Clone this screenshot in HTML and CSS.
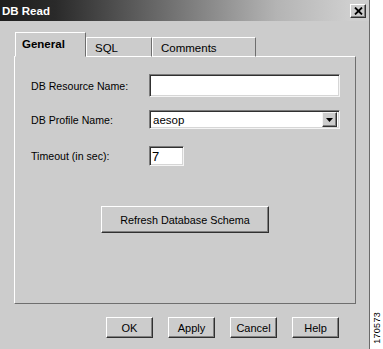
FILE: index.html
```html
<!DOCTYPE html>
<html>
<head>
<meta charset="utf-8">
<link rel="stylesheet" href="styles.css">
</head>
<body>
<div class="page">
  <div class="dialog">
    <div class="titlebar">
      <span class="title">DB Read</span>
      <span class="close"><svg width="9" height="8" viewBox="0 0 9 8"><path d="M1 0.5 L8 7.5 M8 0.5 L1 7.5" stroke="#000" stroke-width="1.8" fill="none"/></svg></span>
    </div>
    <div class="content">
      <div class="tabs">
        <div class="tab active">General</div>
        <div class="tab sql">SQL</div>
        <div class="tab comments">Comments</div>
      </div>
      <div class="panel">
        <div class="row r1">
          <span class="label">DB Resource Name:</span>
          <span class="field wide tall"></span>
        </div>
        <div class="row r2">
          <span class="label">DB Profile Name:</span>
          <span class="field wide select"><span class="val">aesop</span><span class="drop"><svg width="7" height="4" viewBox="0 0 7 4"><path d="M0 0 H7 L3.5 4 Z" fill="#000"/></svg></span></span>
        </div>
        <div class="row r3">
          <span class="label">Timeout (in sec):</span>
          <span class="field small"><span class="val">7</span></span>
        </div>
        <div class="refresh-wrap"><button class="btn refresh">Refresh Database Schema</button></div>
      </div>
      <div class="actions">
        <button class="btn act">OK</button>
        <button class="btn act">Apply</button>
        <button class="btn act">Cancel</button>
        <button class="btn act">Help</button>
      </div>
    </div>
  </div>
  <div class="side"><span class="fig">170573</span></div>
</div>
</body>
</html>
```
FILE: styles.css
```css
html, body {
  margin: 0;
  padding: 0;
  background: #ffffff;
}
body {
  font-family: "Liberation Sans", Arial, sans-serif;
  font-size: 11px;
  color: #000;
}
.page {
  display: flex;
  width: 383px;
  height: 349px;
  overflow: hidden;
}
.dialog {
  width: 370px;
  height: 349px;
  background: #cccccc;
  border-right: 1px solid #6a6a6a;
  box-sizing: border-box;
  display: flex;
  flex-direction: column;
}
.titlebar {
  height: 21px;
  background: linear-gradient(to right, #1e1e1e 0%, #2a2a2a 15%, #6e6e6e 45%, #b4b4b4 75%, #cfcfcf 95%);
  display: flex;
  align-items: center;
  justify-content: space-between;
  padding: 0 3px 0 2px;
  box-sizing: border-box;
}
.title {
  color: #fff;
  font-weight: bold;
  font-size: 11.5px;
  margin-top: 1px;
}
.close {
  width: 16px;
  height: 14px;
  box-sizing: border-box;
  background: #cccccc;
  border: 1px solid;
  border-color: #fff #303030 #303030 #fff;
  box-shadow: inset -1px -1px #808080;
  display: flex;
  align-items: center;
  justify-content: center;
  margin-top: 1px;
}
.content {
  padding: 12px 0 0 14px;
}
.tabs {
  display: flex;
  align-items: flex-end;
  height: 24px;
  margin-left: 1px;
  position: relative;
  z-index: 1;
  margin-bottom: -1px;
}
.tab {
  height: 20px;
  box-sizing: border-box;
  border-top: 1px solid #fff;
  border-left: 1px solid #fff;
  border-right: 1px solid #6e6e6e;
  padding: 4px 0 0 8px;
  font-size: 11.5px;
  border-bottom: 1px solid #fff;
}
.tab.active {
  width: 71px;
  height: 25px;
  font-weight: bold;
  padding: 5px 0 0 6px;
  border-bottom: 1px solid #cccccc;
  background: #cccccc;
}
.tab.sql {
  width: 66px;
}
.tab.comments {
  width: 104px;
}
.panel {
  width: 342px;
  height: 248px;
  box-sizing: border-box;
  border: 1px solid;
  border-color: #fff #6e6e6e #6e6e6e #fff;
  padding: 17px 0 0 16px;
}
.row {
  display: grid;
  grid-template-columns: 118px auto;
  align-items: center;
}
.r2 { margin-top: 13px; }
.r3 { margin-top: 17px; }
.label {
  font-size: 10.6px;
}
.field {
  display: flex;
  align-items: center;
  background: #fff;
  box-sizing: border-box;
  border: 1px solid;
  border-color: #7a7a7a #f4f4f4 #f4f4f4 #7a7a7a;
  box-shadow: inset 1px 1px #303030, inset -1px -1px #d6d6d6;
}
.field.wide { width: 191px; height: 19px; }
.field.tall { height: 23px; }
.field.small { width: 35px; height: 20px; }
.val {
  padding-left: 3px;
  font-size: 11.5px;
}
.field.small .val { font-size: 13px; padding-left: 2px; }
.select {
  justify-content: space-between;
}
.drop {
  width: 15px;
  height: 15px;
  box-sizing: border-box;
  margin-right: 2px;
  background: #cccccc;
  border: 1px solid;
  border-color: #f4f4f4 #303030 #303030 #f4f4f4;
  box-shadow: inset -1px -1px #808080;
  display: flex;
  align-items: center;
  justify-content: center;
}
.refresh-wrap {
  margin-top: 40px;
  padding-left: 70px;
}
.btn {
  font-family: "Liberation Sans", Arial, sans-serif;
  font-size: 11px;
  font-weight: normal;
  color: #000;
  background: #cccccc;
  box-sizing: border-box;
  border: 1px solid;
  border-color: #fff #303030 #303030 #fff;
  box-shadow: inset -1px -1px #808080;
  padding: 0;
  margin: 0;
}
.refresh {
  width: 168px;
  height: 27px;
  font-size: 10.8px;
}
.actions {
  display: flex;
  gap: 15px;
  margin-top: 13px;
  margin-left: 92px;
}
.act {
  width: 47px;
  height: 21px;
}
.side {
  flex: 1;
  display: flex;
  align-items: flex-end;
  justify-content: center;
  padding-bottom: 5px;
  box-sizing: border-box;
}
.fig {
  writing-mode: vertical-rl;
  transform: rotate(180deg);
  font-size: 9px;
  letter-spacing: 0.3px;
}
```
